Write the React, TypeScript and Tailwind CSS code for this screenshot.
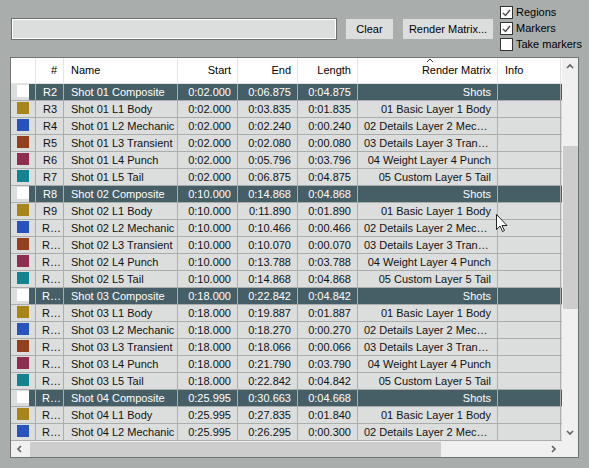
import React from "react";

type Row = {
  id: string;
  name: string;
  start: string;
  end: string;
  length: string;
  matrix: string;
  color: string;
  comp?: boolean;
};

const COLORS = ["#a8851a", "#2753be", "#95401d", "#8f2d50", "#13838f"];
const LAYERS = [
  ["L1 Body", "01 Basic Layer 1 Body"],
  ["L2 Mechanic", "02 Details Layer 2 Mechanic"],
  ["L3 Transient", "03 Details Layer 3 Transient"],
  ["L4 Punch", "04 Weight Layer 4 Punch"],
  ["L5 Tail", "05 Custom Layer 5 Tail"],
];

const SHOTS = [
  { n: "01", start: "0:02.000", ends: ["0:06.875", "0:03.835", "0:02.240", "0:02.080", "0:05.796", "0:06.875"], lens: ["0:04.875", "0:01.835", "0:00.240", "0:00.080", "0:03.796", "0:04.875"] },
  { n: "02", start: "0:10.000", ends: ["0:14.868", "0:11.890", "0:10.466", "0:10.070", "0:13.788", "0:14.868"], lens: ["0:04.868", "0:01.890", "0:00.466", "0:00.070", "0:03.788", "0:04.868"] },
  { n: "03", start: "0:18.000", ends: ["0:22.842", "0:19.887", "0:18.270", "0:18.066", "0:21.790", "0:22.842"], lens: ["0:04.842", "0:01.887", "0:00.270", "0:00.066", "0:03.790", "0:04.842"] },
  { n: "04", start: "0:25.995", ends: ["0:30.663", "0:27.835", "0:26.295", "0:26.105", "0:29.120", "0:30.663"], lens: ["0:04.668", "0:01.840", "0:00.300", "0:00.110", "0:03.125", "0:04.668"] },
];

const ROWS: Row[] = [];
let idx = 2;
for (const s of SHOTS) {
  ROWS.push({ id: `R${idx++}`, name: `Shot ${s.n} Composite`, start: s.start, end: s.ends[0], length: s.lens[0], matrix: "Shots", color: "#ffffff", comp: true });
  LAYERS.forEach(([l, m], i) => {
    ROWS.push({ id: `R${idx++}`, name: `Shot ${s.n} ${l}`, start: s.start, end: s.ends[i + 1], length: s.lens[i + 1], matrix: m, color: COLORS[i] });
  });
}

const cell = "h-full border-r border-[#a9aeac] overflow-hidden whitespace-nowrap text-ellipsis leading-[16px]";

function Check({ checked, label }: { checked?: boolean; label: string }) {
  return (
    <div className="flex items-center h-[13px] gap-[3px]">
      <div className="w-[13px] h-[13px] bg-white border border-[#333] flex items-center justify-center">
        {checked && (
          <svg width="9" height="8" viewBox="0 0 9 8">
            <path d="M1 4 L3.5 6.5 L8 1" stroke="#444" strokeWidth="1.3" fill="none" />
          </svg>
        )}
      </div>
      <span className="whitespace-nowrap leading-[13px]">{label}</span>
    </div>
  );
}

function Chevron({ dir }: { dir: "up" | "down" | "left" | "right" }) {
  const d = {
    up: "M1 5 L4 2 L7 5",
    down: "M1 2 L4 5 L7 2",
    left: "M5 1 L2 4 L5 7",
    right: "M2 1 L5 4 L2 7",
  }[dir];
  return (
    <svg width="8" height="8" viewBox="0 0 8 8">
      <path d={d} stroke="#606060" strokeWidth="1.6" fill="none" />
    </svg>
  );
}

export default function App() {
  return (
    <div
      className="w-[589px] h-[468px] bg-[#a9aeac] overflow-hidden relative text-[11px] text-black"
      style={{ fontFamily: '"Liberation Sans", Arial, sans-serif' }}
    >
      <div className="flex items-start h-[57px]">
        <div className="ml-[11px] mt-[18px] w-[326px] h-[22px] border border-[#6d706f] bg-white p-[1px]">
          <div className="w-full h-full bg-[#dcdedd]" />
        </div>
        <button className="ml-[9px] mt-[19px] w-[47px] h-[20px] bg-[#dcdedd] flex items-center justify-center">
          Clear
        </button>
        <button className="ml-[10px] mt-[19px] w-[90px] h-[20px] bg-[#dcdedd] flex items-center justify-center whitespace-nowrap">
          Render Matrix...
        </button>
        <div className="ml-[7px] mt-[6px] flex flex-col gap-[3px]">
          <Check checked label="Regions" />
          <Check checked label="Markers" />
          <Check label="Take markers" />
        </div>
      </div>

      <div className="ml-[10px] w-[569px] h-[401px] border border-[#6f7372] bg-white flex flex-col">
        <div className="flex h-[383px]">
          <div className="w-[551px] overflow-hidden text-[#111]">
            <div className="flex h-[26px] bg-white text-black border-b border-[#e3e3e3] leading-[25px]">
              <div className="w-[25px] border-r border-[#e3e3e3]" />
              <div className="w-[28px] border-r border-[#e3e3e3] text-right pr-[6px]">#</div>
              <div className="w-[114px] border-r border-[#e3e3e3] pl-[7px]">Name</div>
              <div className="w-[60px] border-r border-[#e3e3e3] text-right pr-[6px]">Start</div>
              <div className="w-[60px] border-r border-[#e3e3e3] text-right pr-[6px]">End</div>
              <div className="w-[60px] border-r border-[#e3e3e3] text-right pr-[6px]">Length</div>
              <div className="w-[140px] border-r border-[#e3e3e3] text-right pr-[6px] relative">
                Render Matrix
                <svg className="absolute left-[68px] top-0" width="8" height="5" viewBox="0 0 8 5">
                  <path d="M1 4 L4 1 L7 4" stroke="#333" strokeWidth="1" fill="none" />
                </svg>
              </div>
              <div className="w-[63px] border-r border-[#e3e3e3] pl-[7px]">Info</div>
            </div>
            {ROWS.map((r) => (
              <div
                key={r.id}
                className={`flex h-[17px] border-b border-[#a9aeac] ${r.comp ? "bg-[#465e65] text-white" : "bg-[#dcdedd]"}`}
              >
                <div className="w-[25px] h-full border-r border-[#a9aeac] bg-[#dcdedd] flex pl-[6px]">
                  <div className="w-[12px] h-[12px] mt-[1px]" style={{ background: r.color }} />
                  {r.comp && <div className="flex-1 bg-[#465e65]" />}
                </div>
                <div className={`${cell} w-[28px] text-right pl-[6px] pr-[6px]`}>{r.id}</div>
                <div className={`${cell} w-[114px] pl-[7px]`}>{r.name}</div>
                <div className={`${cell} w-[60px] text-right pr-[6px]`}>{r.start}</div>
                <div className={`${cell} w-[60px] text-right pr-[6px]`}>{r.end}</div>
                <div className={`${cell} w-[60px] text-right pr-[6px]`}>{r.length}</div>
                <div className={`${cell} w-[140px] text-right pl-[6px] pr-[6px]`}>{r.matrix}</div>
                <div className={`${cell} w-[63px]`} />
              </div>
            ))}
          </div>
          <div className="w-[16px] bg-[#f0f0f0] flex flex-col items-center">
            <div className="h-[17px] flex items-center justify-center">
              <Chevron dir="up" />
            </div>
            <div className="mt-[71px] w-[15px] h-[163px] bg-[#cdcdcd]" />
            <div className="flex-1" />
            <div className="h-[17px] flex items-center justify-center">
              <Chevron dir="down" />
            </div>
          </div>
        </div>
        <div className="flex h-[16px]">
          <div className="w-[551px] bg-[#f0f0f0] flex items-center">
            <div className="w-[17px] flex items-center justify-center">
              <Chevron dir="left" />
            </div>
            <div className="w-[411px] h-[15px] bg-[#cdcdcd] ml-[2px]" />
            <div className="flex-1" />
            <div className="w-[17px] flex items-center justify-center">
              <Chevron dir="right" />
            </div>
          </div>
          <div className="w-[16px] bg-[#f0f0f0]" />
        </div>
      </div>

      <svg className="absolute left-[496px] top-[214px]" width="12" height="19" viewBox="0 0 12 19">
        <path d="M0.5 0.5 L0.5 15.5 L4 12 L6.5 17.5 L8.5 16.5 L6 11.5 L11 11.5 Z" fill="white" stroke="#222" strokeWidth="1" />
      </svg>
    </div>
  );
}
